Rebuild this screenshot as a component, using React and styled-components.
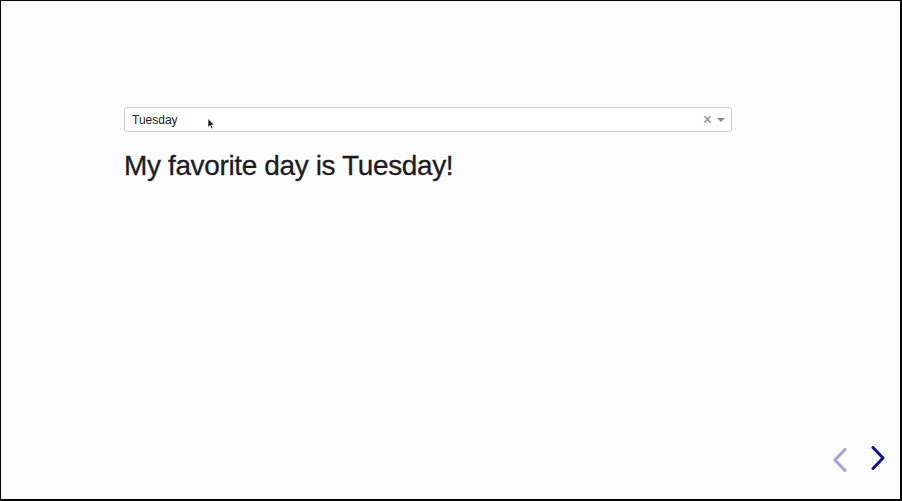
import React from 'react';
import styled, { createGlobalStyle } from 'styled-components';

const GlobalStyle = createGlobalStyle`
  html, body {
    margin: 0;
    padding: 0;
    background: #fcfcfc;
  }
  body {
    font-family: "Liberation Sans", Arial, sans-serif;
  }
`;

const Frame = styled.div`
  box-sizing: border-box;
  width: 902px;
  height: 501px;
  border-style: solid;
  border-color: #000;
  border-width: 1px 2px 2px 1px;
  background: #fcfcfc;
  display: flex;
  flex-direction: column;
`;

const Content = styled.div`
  flex: 1;
  padding: 106px 0 0 123px;
`;

const Select = styled.div`
  position: relative;
  box-sizing: border-box;
  width: 608px;
  height: 25px;
  border: 1px solid #cfcfcf;
  border-radius: 3px;
  background: #fff;
  display: flex;
  align-items: center;
  padding: 0 6px 0 7px;
  font-size: 12px;
  color: #222;
`;

const Value = styled.span`
  flex: 1;
`;

const Clear = styled.span`
  color: #888;
  font-size: 16px;
  line-height: 1;
  margin-right: 5px;
`;

const Caret = styled.span`
  width: 0;
  height: 0;
  border-left: 4px solid transparent;
  border-right: 4px solid transparent;
  border-top: 4px solid #888;
  margin-top: 1px;
`;

const Cursor = styled.svg`
  position: absolute;
  left: 82px;
  top: 10px;
`;

const Heading = styled.h1`
  margin: 18px 0 0 0;
  font-family: "Liberation Sans", Arial, sans-serif;
  font-size: 28px;
  font-weight: 400;
  letter-spacing: -0.37px;
  -webkit-text-stroke: 0.3px #1d1d1f;
  color: #1d1d1f;
`;

const Nav = styled.div`
  display: flex;
  justify-content: flex-end;
  gap: 22px;
  padding: 0 14px 27px 0;
  align-items: center;
`;

const Arrow = styled.svg`
  display: block;
  margin-top: ${(p) => (p.$offset ? '4px' : '0')};
`;

export default function App() {
  return (
    <>
      <GlobalStyle />
      <Frame>
        <Content>
          <Select>
            <Value>Tuesday</Value>
            <Clear>×</Clear>
            <Caret />
            <Cursor width="8" height="12" viewBox="0 0 8 12">
              <path d="M1 0.5 L1 9.5 L3 7.5 L4.5 11 L6 10.3 L4.6 7 L7.3 7 Z" fill="#111" stroke="#fff" strokeWidth="0.7" />
            </Cursor>
          </Select>
          <Heading>My favorite day is Tuesday!</Heading>
        </Content>
        <Nav>
          <Arrow $offset width="16" height="24" viewBox="0 0 16 24">
            <path d="M13 1.5 L3 12 L13 22.5" fill="none" stroke="#a2a4dc" strokeWidth="3" strokeLinecap="round" strokeLinejoin="round" />
          </Arrow>
          <Arrow width="16" height="24" viewBox="0 0 16 24">
            <path d="M3 1.5 L13 12 L3 22.5" fill="none" stroke="#14148a" strokeWidth="3" strokeLinecap="round" strokeLinejoin="round" />
          </Arrow>
        </Nav>
      </Frame>
    </>
  );
}
